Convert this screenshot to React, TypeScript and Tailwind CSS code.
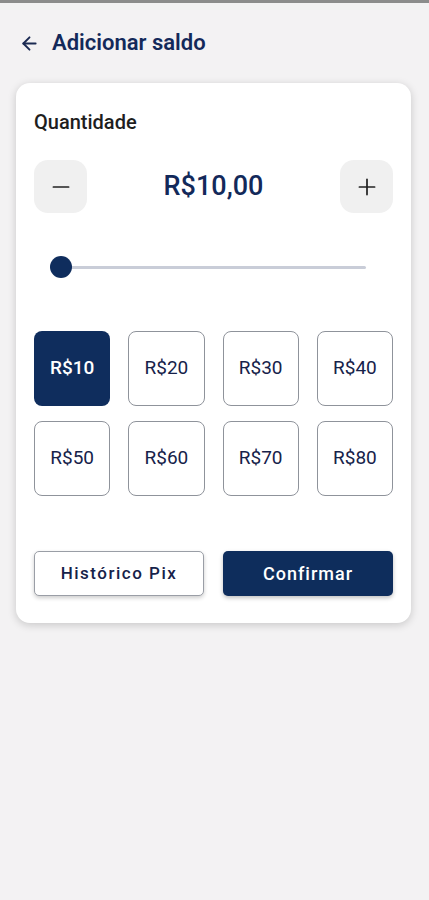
import React, { useState } from 'react';
import { ArrowLeft, Minus, Plus } from 'lucide-react';

const presets = [10, 20, 30, 40, 50, 60, 70, 80];

export default function App() {
  const [amount, setAmount] = useState(10);
  const min = 10;
  const max = 500;
  const pct = ((amount - min) / (max - min)) * 100;

  return (
    <div className="min-h-[900px] bg-[#f3f2f3] font-['Roboto',sans-serif]">
      <div className="h-[3px] bg-[#8c8c8c]" />

      {/* Header */}
      <div className="flex items-center gap-[12px] pl-[19px] pt-[28px] h-[52px] mb-[28px]">
        <ArrowLeft className="h-[21px] w-[21px] text-[#1b2a52]" strokeWidth={2.2} />
        <h1 className="text-[22px] leading-6 font-semibold text-[#13295a]">Adicionar saldo</h1>
      </div>

      {/* Card */}
      <div className="ml-4 mr-[18px] rounded-[14px] bg-white px-[18px] pt-[27px] pb-[27px] shadow-[0_2px_8px_rgba(0,0,0,0.18)]">
        <p className="text-[20px] leading-6 font-medium text-[#1e1e1e]">Quantidade</p>

        <div className="mt-[26px] flex items-center justify-between">
          <button
            onClick={() => setAmount(Math.max(min, amount - 10))}
            className="flex h-[53px] w-[53px] items-center justify-center rounded-[14px] bg-[#f0f0f0] text-[#222]"
          >
            <Minus size={26} strokeWidth={1.6} />
          </button>
          <span className="text-[27px] font-medium text-[#13295a]">R${amount},00</span>
          <button
            onClick={() => setAmount(Math.min(max, amount + 10))}
            className="flex h-[53px] w-[53px] items-center justify-center rounded-[14px] bg-[#f0f0f0] text-[#222]"
          >
            <Plus size={26} strokeWidth={1.6} />
          </button>
        </div>

        {/* Slider */}
        <div className="mt-[43px] px-[27px]">
          <div className="relative h-[22px]">
            <div className="absolute left-0 right-0 top-[10px] h-[3px] rounded-full bg-[#c9cdd8]" />
            <div
              className="absolute top-0 h-[22px] w-[22px] -translate-x-1/2 rounded-full bg-[#0f2d5d]"
              style={{ left: `${pct}%` }}
            />
          </div>
        </div>

        {/* Presets */}
        <div className="mt-[53px] grid grid-cols-4 gap-x-[18px] gap-y-[15px]">
          {presets.map((v) => {
            const active = v === amount;
            return (
              <button
                key={v}
                onClick={() => setAmount(v)}
                className={
                  active
                    ? 'h-[75px] rounded-[8px] bg-[#0f2d5d] text-[19px] font-medium text-white'
                    : 'h-[75px] rounded-[8px] border border-[#8f939b] bg-white text-[19px] font-normal text-[#16224a]'
                }
              >
                R${v}
              </button>
            );
          })}
        </div>

        {/* Actions */}
        <div className="mt-[55px] grid grid-cols-2 gap-x-[19px]">
          <button className="h-[45px] rounded-[5px] border border-[#9a9ea6] bg-white text-[17px] font-medium tracking-[1.5px] text-[#16224a] shadow-[0_2px_4px_rgba(0,0,0,0.2)]">
            Histórico Pix
          </button>
          <button className="h-[45px] rounded-[5px] bg-[#0e2d5c] text-[18px] font-medium tracking-[1px] text-white shadow-[0_2px_4px_rgba(0,0,0,0.25)]">
            Confirmar
          </button>
        </div>
      </div>
    </div>
  );
}
